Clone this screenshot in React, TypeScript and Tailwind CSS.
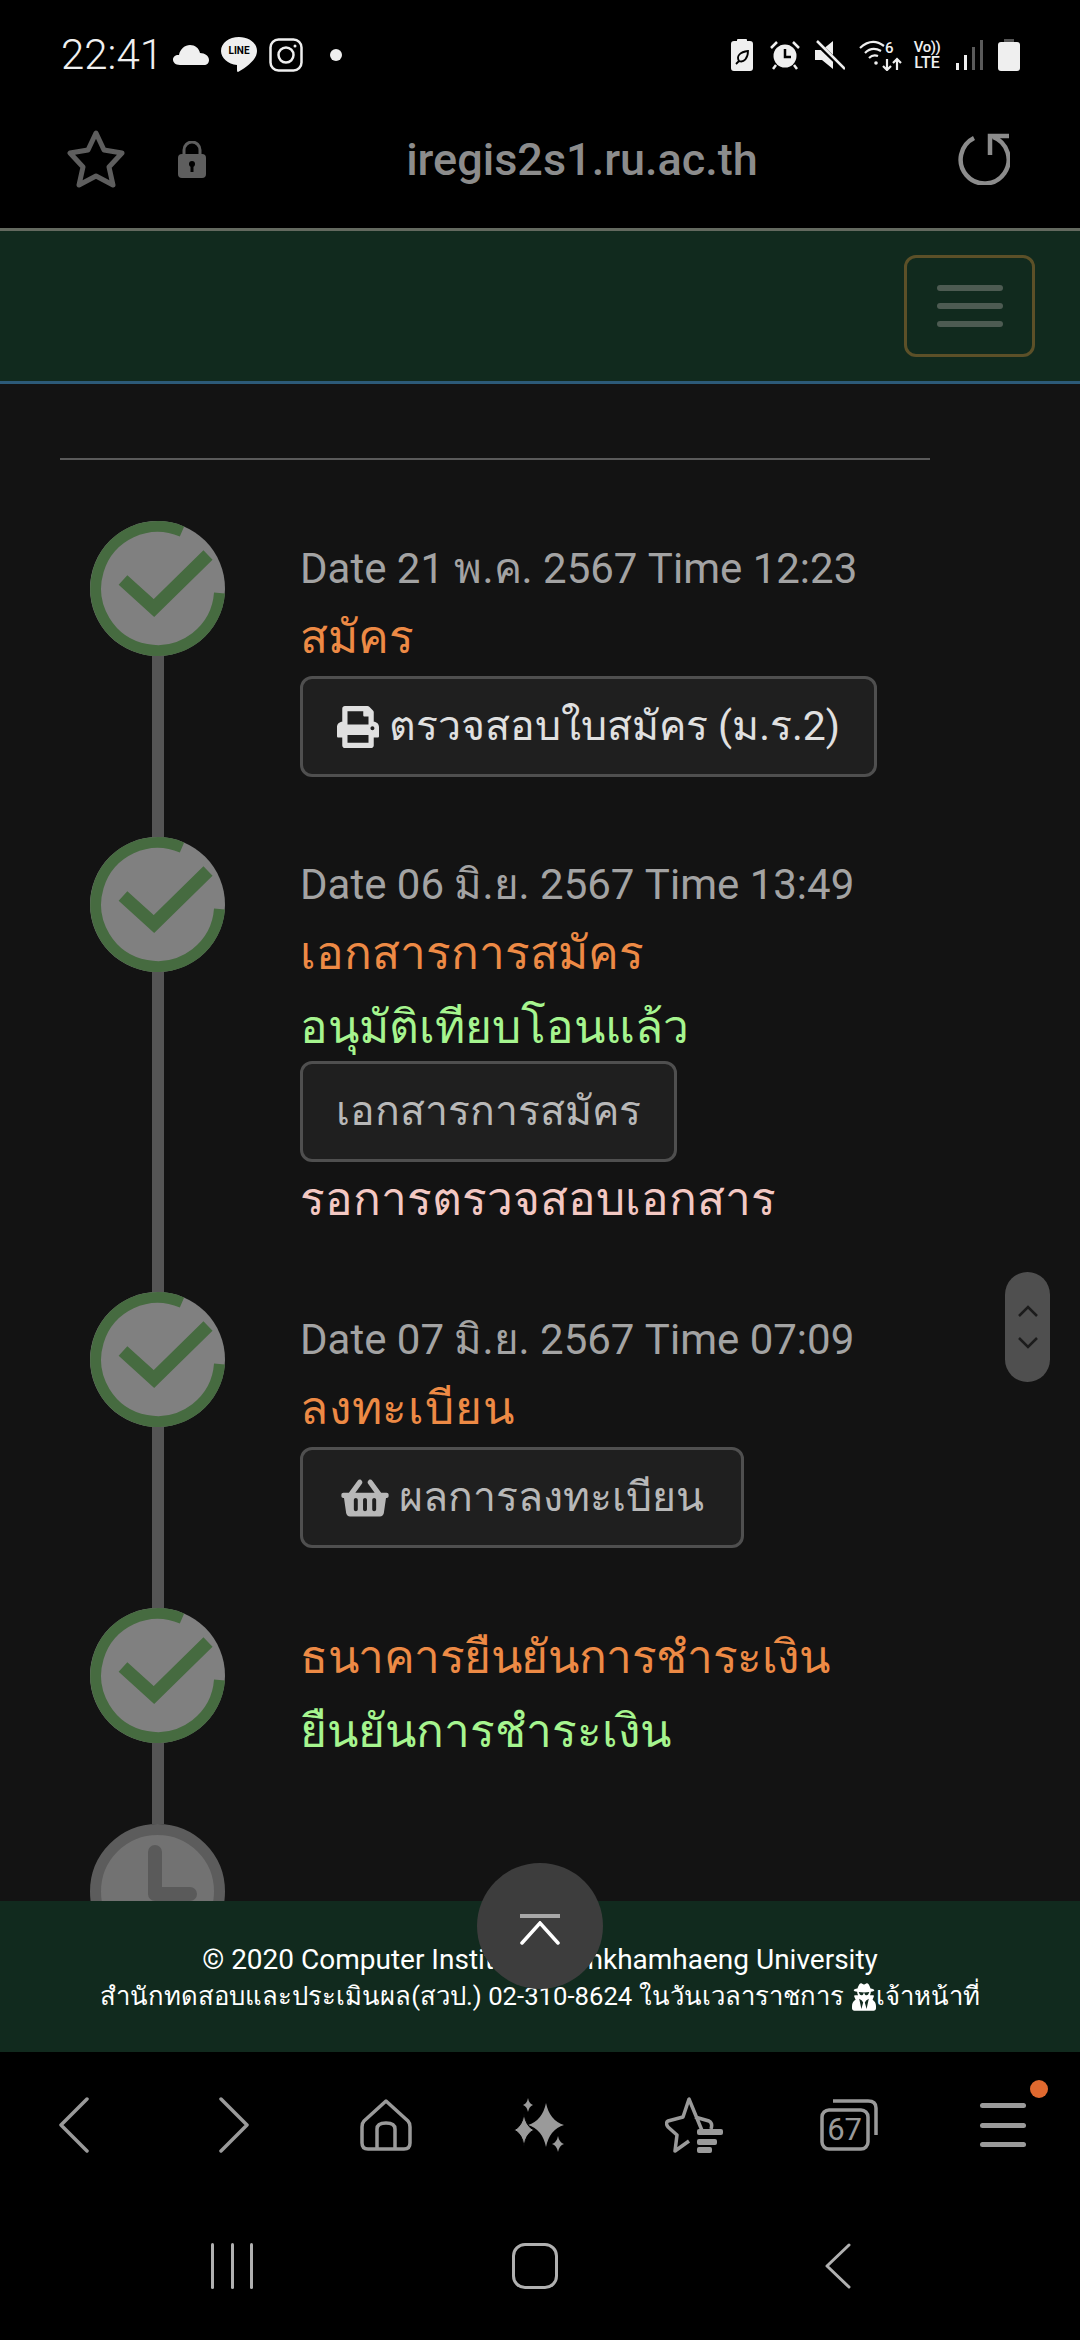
import React from "react";
import { FaPrint, FaShoppingBasket, FaUserSecret } from "react-icons/fa";

const font = "font-['Roboto','Noto_Sans','DejaVu_Sans',sans-serif]";

function CheckCircle() {
  return (
    <svg viewBox="0 0 135 135" className="w-[135px] h-[135px] shrink-0 block" preserveAspectRatio="none">
      <circle cx="67.5" cy="67.5" r="67.5" fill="#808080" />
      <path d="M129.500 72 A62 62 0 1 1 92 10.500" fill="none" stroke="#466b40" strokeWidth="11" />
      <path d="M33 59 L64 87 L118 34" fill="none" stroke="#466b40" strokeWidth="13" />
    </svg>
  );
}

function ClockCircle() {
  return (
    <svg viewBox="0 0 135 135" className="w-[135px] h-[135px] shrink-0 block" preserveAspectRatio="none">
      <circle cx="67.5" cy="67.5" r="62" fill="#727272" stroke="#5c5c5c" strokeWidth="11" />
      <path d="M65 28 L65 70 L100 70" fill="none" stroke="#5a5a5a" strokeWidth="14" strokeLinecap="round" strokeLinejoin="round" />
    </svg>
  );
}

function StatusBar() {
  return (
    <div className="h-[110px] flex items-center pl-[61px] pr-[60px] pb-[1px] text-[#f0f0f0]">
      <span className="text-[42px] leading-none w-[100px] font-light">22:41</span>
      <svg viewBox="0 0 36 20" className="w-[36px] h-[20px] ml-[12px]" fill="#efefef">
        <path d="M7 20 C2 20 0 17 0 14.5 C0 11.500 3 9.500 6 10 C7 4 12 0 17 0 C22 0 26 3 27 8 C32 8 36 11 36 15 C36 18 34 20 31 20 Z" />
      </svg>
      <div className="relative w-[36px] h-[36px] ml-[12px]">
        <svg viewBox="0 0 36 36" className="absolute inset-0" fill="#efefef">
          <path d="M18 0 C28 0 36 6 36 14 C36 22 27 29 17 35 C16 35 16 34 16 32 L16 28 C7 27 0 21 0 14 C0 6 8 0 18 0 Z" />
        </svg>
        <span className="absolute left-0 right-0 top-[8px] text-center text-[10px] leading-[12px] font-bold text-black">LINE</span>
      </div>
      <svg viewBox="0 0 34 34" className="w-[34px] h-[34px] ml-[12px]" fill="none" stroke="#efefef" strokeWidth="2.500">
        <rect x="1.500" y="1.500" width="31" height="31" rx="8" />
        <circle cx="17" cy="17" r="7.500" />
        <circle cx="26" cy="8" r="1.500" fill="#efefef" stroke="none" />
      </svg>
      <div className="w-[12px] h-[12px] rounded-full bg-[#efefef] ml-[27px]" />
      <div className="flex-1" />
      <svg viewBox="0 0 22 32" className="w-[22px] h-[32px]">
        <path d="M6 2 L6 1 Q6 0 7 0 L15 0 Q16 0 16 1 L16 2 L19 2 Q22 2 22 5 L22 29 Q22 32 19 32 L3 32 Q0 32 0 29 L0 5 Q0 2 3 2 Z" fill="#efefef" />
        <path d="M5 25 L8 22 M8 22 C5 17 9 13 17 12 C17 19 13 24 8 22 Z" fill="none" stroke="#000" strokeWidth="1.800" />
      </svg>
      <svg viewBox="0 0 30 30" className="w-[30px] h-[30px] ml-[17px]">
        <circle cx="15" cy="16" r="11.500" fill="#efefef" />
        <path d="M15 9 L15 17 L21 17" fill="none" stroke="#000" strokeWidth="2.500" />
        <path d="M1 8 L7 2 M29 8 L23 2 M6 25 L3 29 M24 25 L27 29" stroke="#efefef" strokeWidth="2.500" />
      </svg>
      <svg viewBox="0 0 30 30" className="w-[30px] h-[30px] ml-[15px]">
        <path d="M0 10 L7 10 L18 1 L18 29 L7 20 L0 20 Z" fill="#efefef" />
        <path d="M1 2 L29 29" stroke="#000" strokeWidth="5" />
        <path d="M2 1 L30 29" stroke="#efefef" strokeWidth="2.500" />
      </svg>
      <div className="relative w-[43px] h-[32px] ml-[14px]">
        <svg viewBox="0 0 43 32" className="absolute inset-0" fill="none" stroke="#efefef" strokeWidth="2.200">
          <path d="M1 9 Q13 -2 25 7 M6 14 Q13 7 22 12 M10 19 Q14 15 19 17" />
          <circle cx="17" cy="24" r="1.800" fill="#efefef" stroke="none" />
          <path d="M28 20 L28 31 M24 27 L28 31 L32 27 M38 31 L38 20 M34 24 L38 20 L42 24" />
        </svg>
        <span className="absolute left-[26px] top-[0px] text-[15px] leading-[18px] font-medium">6</span>
      </div>
      <div className="w-[32px] ml-[9px] text-[15px] leading-[15px] font-medium text-center">
        <div className="tracking-[-0.5px]">Vo))</div>
        <div className="text-[16px]">LTE</div>
      </div>
      <svg viewBox="0 0 27 30" className="w-[27px] h-[30px] ml-[13px]">
        <rect x="0" y="23" width="3" height="7" fill="#efefef" />
        <rect x="8" y="15" width="3" height="15" fill="#efefef" />
        <rect x="16" y="7" width="3" height="23" fill="#5a5a5a" />
        <rect x="24" y="0" width="3" height="30" fill="#5a5a5a" />
      </svg>
      <svg viewBox="0 0 22 32" className="w-[22px] h-[32px] ml-[15px]">
        <rect x="6" y="0" width="10" height="4" fill="#555" />
        <rect x="0" y="3" width="22" height="29" rx="3" fill="#efefef" />
      </svg>
    </div>
  );
}

function BrowserBar() {
  return (
    <div className="h-[118px] flex items-center pl-[67px] pr-[70px] pb-[20px]">
      <svg viewBox="0 0 58 58" className="w-[58px] h-[58px]" fill="none" stroke="#5e5e5e" strokeWidth="5" strokeLinejoin="round">
        <path d="M29 3 L37 20 L55 23 L42 37 L46 55 L29 46 L12 55 L16 37 L3 23 L21 20 Z" />
      </svg>
      <svg viewBox="0 0 28 37" className="w-[28px] h-[37px] ml-[53px]">
        <path d="M6 15 L6 9 A8 8 0 0 1 22 9 L22 15" fill="none" stroke="#5e5e5e" strokeWidth="3" />
        <rect x="0" y="13" width="28" height="24" rx="4" fill="#5e5e5e" />
        <rect x="12.500" y="22" width="3" height="9" fill="#000" />
        <circle cx="14" cy="23" r="3" fill="#000" />
      </svg>
      <div className="flex-1 text-center text-[45px] leading-none font-medium text-[#8c8c8c]">iregis2s1.ru.ac.th</div>
      <svg viewBox="0 0 52 52" className="w-[52px] h-[52px]" fill="none" stroke="#8c8c8c" strokeWidth="4.500">
        <path d="M16 5 A24 24 0 1 0 35 4" />
        <path d="M32 22 L32 3 L51 3" />
      </svg>
    </div>
  );
}

function TimelineRow({ height, line = true, icon = <CheckCircle />, children }: { height: string; line?: boolean; icon?: React.ReactNode; children?: React.ReactNode }) {
  return (
    <div className={`flex ${height}`}>
      <div className="w-[135px] ml-[90px] flex flex-col items-center">
        {icon}
        {line && <div className="w-[12px] flex-1 bg-[#555555]" />}
      </div>
      <div className="ml-[75px] pt-[16px] flex-1 min-w-0">{children}</div>
    </div>
  );
}

function DateLine({ children }: { children: React.ReactNode }) {
  return <div className="text-[42px] leading-[63px] text-[#a3a3a3] whitespace-nowrap">{children}</div>;
}

function Title({ color, children }: { color: string; children: React.ReactNode }) {
  return <div className={`text-[46px] leading-[74px] whitespace-nowrap ${color}`}>{children}</div>;
}

function OutlineButton({ width, text, margin, children }: { width: string; text: string; margin: string; children: React.ReactNode }) {
  return (
    <div className={`${width} ${text} ${margin} h-[101px] flex items-center justify-center gap-[10px] rounded-[12px] border-[3px] border-[#4f4f4f] bg-[#1f1f1f] text-[41px] whitespace-nowrap`}>
      {children}
    </div>
  );
}

// four point sparkle centred on cx,cy
function sparkle(cx: number, cy: number, w: number, h: number) {
  return `M${cx} ${cy - h} Q${cx + w * 0.2} ${cy - h * 0.2} ${cx + w} ${cy} Q${cx + w * 0.2} ${cy + h * 0.2} ${cx} ${cy + h} Q${cx - w * 0.2} ${cy + h * 0.2} ${cx - w} ${cy} Q${cx - w * 0.2} ${cy - h * 0.2} ${cx} ${cy - h} Z`;
}

function BottomNav() {
  return (
    <div className="flex-1 bg-black">
      <div className="grid grid-cols-7 h-[146px] items-center">
        <div className="flex justify-center">
          <svg viewBox="0 0 30 56" className="w-[30px] h-[56px] -ml-[6px]" fill="none" stroke="#9a9a9a" strokeWidth="3.500" strokeLinecap="round" strokeLinejoin="round"><path d="M28 2 L2 28 L28 54" /></svg>
        </div>
        <div className="flex justify-center">
          <svg viewBox="0 0 30 56" className="w-[30px] h-[56px] ml-[6px]" fill="none" stroke="#9a9a9a" strokeWidth="3.500" strokeLinecap="round" strokeLinejoin="round"><path d="M2 2 L28 28 L2 54" /></svg>
        </div>
        <div className="flex justify-center">
          <svg viewBox="0 0 52 52" className="w-[52px] h-[52px]" fill="none" stroke="#9a9a9a" strokeWidth="3.500" strokeLinejoin="round">
            <path d="M26 2 L48 22 Q50 24 50 28 L50 44 Q50 50 44 50 L8 50 Q2 50 2 44 L2 28 Q2 24 4 22 Z" />
            <path d="M17 50 L17 30 Q17 24 26 24 Q35 24 35 30 L35 50" />
          </svg>
        </div>
        <div className="flex justify-center">
          <svg viewBox="0 0 52 54" className="w-[52px] h-[54px]" fill="#9a9a9a">
            <path d={sparkle(32, 27, 18, 22)} />
            <path d={sparkle(10, 32, 10, 16)} stroke="#000" strokeWidth="1" />
            <path d={sparkle(14, 7, 5, 7)} />
            <path d={sparkle(44, 46, 6, 8)} />
          </svg>
        </div>
        <div className="flex justify-center">
          <svg viewBox="0 0 58 56" className="w-[58px] h-[56px]">
            <path d="M38 36 L24 2 L18 20 L3 24 Q0 26 3 30 L12 38 L10 54 L24 44 M30 20 L44 24 Q48 26 46 32" fill="none" stroke="#9a9a9a" strokeWidth="3.500" strokeLinejoin="round" />
            <rect x="32" y="32" width="26" height="6" rx="2" fill="#9a9a9a" />
            <rect x="32" y="42" width="20" height="6" rx="2" fill="#9a9a9a" />
            <rect x="32" y="50" width="15" height="6" rx="2" fill="#9a9a9a" />
          </svg>
        </div>
        <div className="flex justify-center">
          <div className="relative w-[58px] h-[52px]">
            <svg viewBox="0 0 58 52" className="absolute inset-0" fill="none" stroke="#9a9a9a" strokeWidth="3.500">
              <path d="M13 2 L48 2 Q56 2 56 9 L56 36" />
              <rect x="2" y="11" width="46" height="39" rx="7" />
            </svg>
            <span className="absolute left-[2px] w-[46px] top-[11px] text-center text-[31px] leading-[39px] text-[#9a9a9a]">67</span>
          </div>
        </div>
        <div className="flex justify-center">
          <div className="relative w-[46px] h-[44px] flex flex-col justify-between">
            <div className="h-[5px] rounded-sm bg-[#9a9a9a]" />
            <div className="h-[5px] rounded-sm bg-[#9a9a9a]" />
            <div className="h-[5px] rounded-sm bg-[#9a9a9a]" />
            <div className="absolute left-[50px] top-[-23px] w-[18px] h-[18px] rounded-full bg-[#e0692f]" />
          </div>
        </div>
      </div>
      <div className="grid grid-cols-3 pl-[81px] pr-[91px] pt-[45px]">
        <div className="flex justify-center">
          <div className="w-[42px] h-[46px] flex justify-between">
            <div className="w-[3px] rounded-full bg-[#b0b0b0]" />
            <div className="w-[3px] rounded-full bg-[#b0b0b0]" />
            <div className="w-[3px] rounded-full bg-[#b0b0b0]" />
          </div>
        </div>
        <div className="flex justify-center">
          <div className="w-[46px] h-[46px] rounded-[13px] border-[3px] border-[#b0b0b0]" />
        </div>
        <div className="flex justify-center">
          <svg viewBox="0 0 26 46" className="w-[26px] h-[46px]" fill="none" stroke="#b0b0b0" strokeWidth="3" strokeLinecap="round" strokeLinejoin="round"><path d="M24 2 L2 23 L24 44" /></svg>
        </div>
      </div>
    </div>
  );
}

export default function App() {
  return (
    <div className={`relative w-[1080px] h-[2340px] overflow-hidden flex flex-col bg-black ${font}`}>
      <StatusBar />
      <BrowserBar />

      {/* Navbar */}
      <div className="h-[156px] border-t-[3px] border-b-[3px] border-t-[#63695f] border-b-[#2c5a78] bg-[#112a1e] flex items-center justify-end pr-[45px]">
        <div className="w-[131px] h-[102px] rounded-[12px] border-[3px] border-[#5c5028] flex flex-col items-center justify-center gap-[12px]">
          <div className="w-[66px] h-[6px] rounded-full bg-[#4d5b52]" />
          <div className="w-[66px] h-[6px] rounded-full bg-[#4d5b52]" />
          <div className="w-[66px] h-[6px] rounded-full bg-[#4d5b52]" />
        </div>
      </div>

      {/* Main content */}
      <div className="h-[1517px] overflow-hidden bg-[#131313]">
        <div className="ml-[60px] mt-[74px] w-[870px] h-[2px] bg-[#5a5a5a]" />
        <div className="mt-[61px]">
          <TimelineRow height="h-[316px]">
            <DateLine>Date 21 พ.ค. 2567 Time 12:23</DateLine>
            <Title color="text-[#ed8a45]">สมัคร</Title>
            <OutlineButton width="w-[577px]" text="text-[#e0e0e0]" margin="mt-[2px]">
              <FaPrint className="w-[42px] h-[42px]" />
              ตรวจสอบใบสมัคร (ม.ร.2)
            </OutlineButton>
          </TimelineRow>
          <TimelineRow height="h-[455px]">
            <DateLine>Date 06 มิ.ย. 2567 Time 13:49</DateLine>
            <Title color="text-[#ed8a45]">เอกสารการสมัคร</Title>
            <Title color="text-[#a6f58f]">อนุมัติเทียบโอนแล้ว</Title>
            <OutlineButton width="w-[377px]" text="text-[#b8b8b8]" margin="-mt-[3px]">เอกสารการสมัคร</OutlineButton>
            <Title color="text-[#f3c8c3]">รอการตรวจสอบเอกสาร</Title>
          </TimelineRow>
          <TimelineRow height="h-[316px]">
            <DateLine>Date 07 มิ.ย. 2567 Time 07:09</DateLine>
            <Title color="text-[#ed8a45] tracking-[0.8px]">ลงทะเบียน</Title>
            <OutlineButton width="w-[444px]" text="text-[#b8b8b8]" margin="mt-[2px]">
              <FaShoppingBasket className="w-[48px] h-[42px]" />
              ผลการลงทะเบียน
            </OutlineButton>
          </TimelineRow>
          <TimelineRow height="h-[216px]">
            <div className="-mt-[4px]">
              <Title color="text-[#ed8a45] tracking-[-0.45px]">ธนาคารยืนยันการชำระเงิน</Title>
              <Title color="text-[#a6f58f]">ยืนยันการชำระเงิน</Title>
            </div>
          </TimelineRow>
          <TimelineRow height="h-[200px]" line={false} icon={<ClockCircle />} />
        </div>
      </div>

      {/* Footer */}
      <div className="h-[151px] bg-[#112a1e] pt-[40px] text-center text-white text-[28px] leading-[37px] whitespace-nowrap">
        <div>© 2020 Computer Institute, Ramkhamhaeng University</div>
        <div className="flex items-center justify-center text-[25.7px]">
          สำนักทดสอบและประเมินผล(สวป.) 02-310-8624 ในวันเวลาราชการ
          <FaUserSecret className="w-[24px] h-[28px] ml-[8px]" />
          เจ้าหน้าที่
        </div>
      </div>

      <BottomNav />

      {/* Floating scroll controls */}
      <div className="absolute left-[1005px] top-[1272px] w-[45px] h-[110px] rounded-full bg-[#4f4f4f] flex flex-col items-center justify-center gap-[20px]">
        <svg viewBox="0 0 20 12" className="w-[20px] h-[12px]" fill="none" stroke="#1c1c1c" strokeWidth="2.500"><path d="M1 11 L10 2 L19 11" /></svg>
        <svg viewBox="0 0 20 12" className="w-[20px] h-[12px]" fill="none" stroke="#1c1c1c" strokeWidth="2.500"><path d="M1 1 L10 10 L19 1" /></svg>
      </div>
      <div className="absolute left-[477px] top-[1863px] w-[126px] h-[126px] rounded-full bg-[#3d3d3d] flex flex-col items-center justify-center pt-[6px]">
        <div className="w-[40px] h-[4px] bg-[#a8a8a8]" />
        <svg viewBox="0 0 40 24" className="w-[40px] h-[24px] mt-[3px]" fill="none" stroke="#fff" strokeWidth="3.500" strokeLinecap="round"><path d="M2 22 L20 2 L38 22" /></svg>
      </div>
    </div>
  );
}
